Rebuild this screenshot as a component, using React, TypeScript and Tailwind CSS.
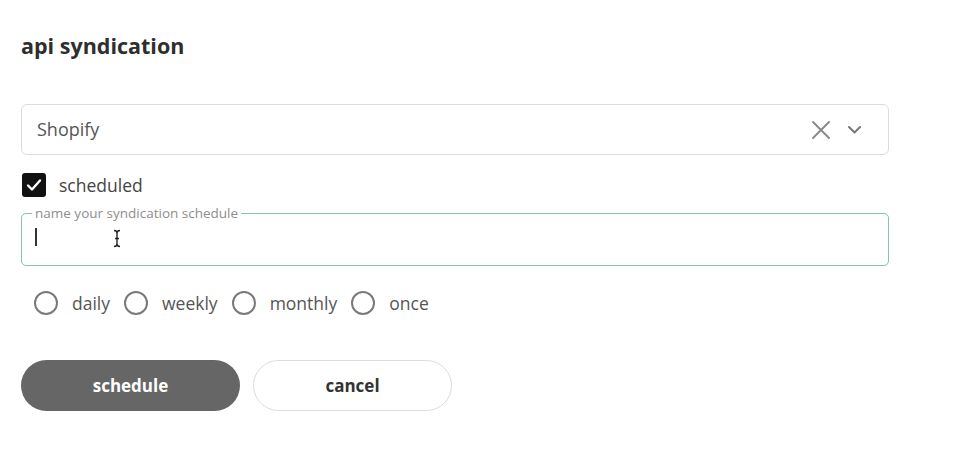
import React, { useState } from 'react';

const font = { fontFamily: '"Open Sans", Lato, sans-serif' };

export default function App() {
  const [freq, setFreq] = useState<string>('');

  return (
    <div className="w-[954px] h-[454px] bg-white relative" style={font}>
      <div className="pl-[21px] pt-[32px] w-[889px]">
        <h1 className="text-[21.5px] leading-[28px] font-bold text-[#2e2e2e]">api syndication</h1>

        {/* select */}
        <div className="mt-[44px] h-[51px] w-[868px] rounded-[6px] border border-[#dcdcdc] flex items-center pl-[15px] pr-[26px]">
          <span className="flex-1 text-[18px] text-[#555]">Shopify</span>
          <svg width="20" height="20" viewBox="0 0 20 20" className="mr-[16px]">
            <path d="M2 2 L18 18 M18 2 L2 18" stroke="#8a8a8a" strokeWidth="2" strokeLinecap="round" />
          </svg>
          <svg width="15" height="10" viewBox="0 0 15 10">
            <path d="M2 2 L7.5 7.5 L13 2" stroke="#777" strokeWidth="2" fill="none" strokeLinecap="round" strokeLinejoin="round" />
          </svg>
        </div>

        {/* checkbox */}
        <label className="mt-[18px] flex items-center gap-[13px] h-[24px]">
          <span className="ml-[1px] w-[24px] h-[24px] rounded-[3px] bg-[#111] flex items-center justify-center">
            <svg width="16" height="14" viewBox="0 0 16 14">
              <path d="M2 7.5 L6 11.5 L14 2.5" stroke="#fff" strokeWidth="2.4" fill="none" strokeLinecap="round" strokeLinejoin="round" />
            </svg>
          </span>
          <span className="text-[17.5px] text-[#444]">scheduled</span>
        </label>

        {/* fieldset input */}
        <fieldset className="mt-[10px] w-[868px] h-[59px] rounded-[5px] border-[1.5px] border-[#86c2ae] px-[10px] relative">
          <legend className="px-[3px] text-[13.5px] leading-[12px] text-[#8e8e8e]">name your syndication schedule</legend>
          <div className="flex items-center h-[36px] pl-[3px]">
            <span className="w-[1.5px] h-[18px] bg-[#333]" />
          </div>
          <svg width="10" height="19" viewBox="0 0 10 19" className="absolute left-[90px] top-[10px]">
            <path d="M2 1.5 Q5 1.5 5 4 L5 15 Q5 17.5 2 17.5 M8 1.5 Q5 1.5 5 4 M5 15 Q5 17.5 8 17.5 M3 9.5 L7 9.5" stroke="#222" strokeWidth="1.4" fill="none" />
          </svg>
        </fieldset>

        {/* radios */}
        <div className="mt-[25px] ml-[13px] flex items-center h-[24px] text-[17.5px] text-[#555]">
          {['daily', 'weekly', 'monthly', 'once'].map((f) => (
            <label key={f} className="flex items-center mr-[14px]" onClick={() => setFreq(f)}>
              <span className="w-[24px] h-[24px] rounded-full border-2 border-[#7a7a7a] flex items-center justify-center">
                {freq === f && <span className="w-[12px] h-[12px] rounded-full bg-[#555]" />}
              </span>
              <span className="ml-[14px]">{f}</span>
            </label>
          ))}
        </div>

        {/* buttons */}
        <div className="mt-[45px] flex gap-[13px]">
          <button className="w-[219px] h-[51px] rounded-full bg-[#666666] text-white text-[17px] font-bold">schedule</button>
          <button className="w-[199px] h-[51px] rounded-full border border-[#dcdcdc] bg-white text-[#333] text-[17px] font-bold">cancel</button>
        </div>
      </div>
    </div>
  );
}
